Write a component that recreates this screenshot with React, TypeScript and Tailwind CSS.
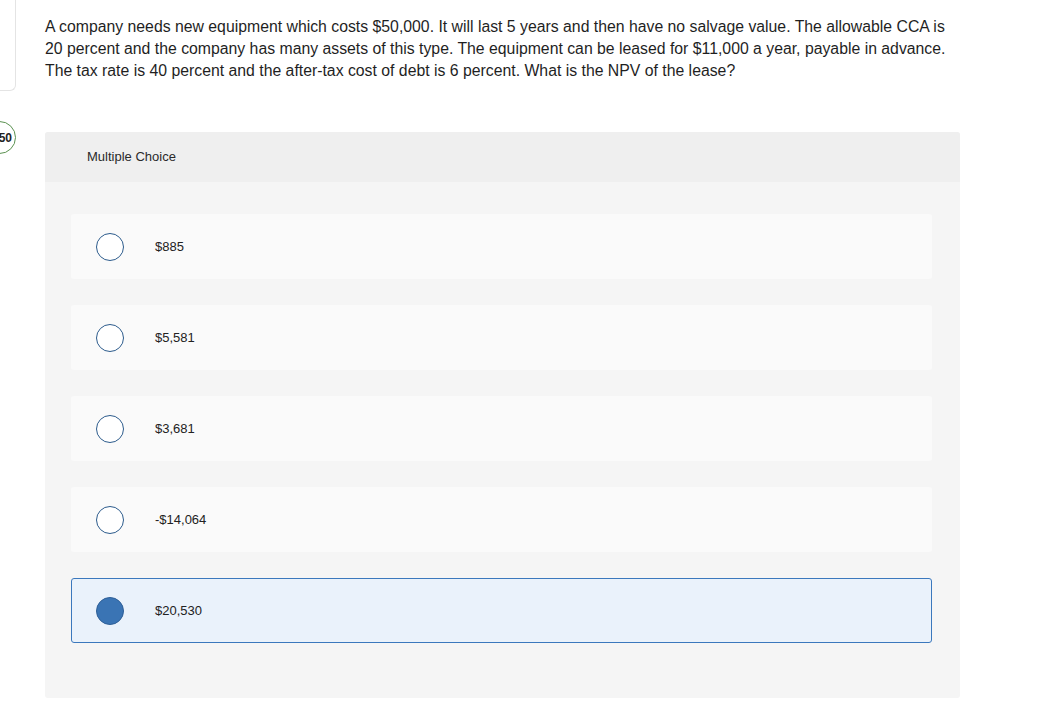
import React from 'react'

const options = [
  { label: '$885', selected: false },
  { label: '$5,581', selected: false },
  { label: '$3,681', selected: false },
  { label: '-$14,064', selected: false },
  { label: '$20,530', selected: true },
]

function Radio({ checked }: { checked: boolean }) {
  return checked ? (
    <span className="block w-[28px] h-[28px] rounded-full bg-[#3a74b4] border border-[#2e5f97] shrink-0" />
  ) : (
    <span className="block w-[28px] h-[28px] rounded-full bg-white border-[1.5px] border-[#2c5b8c] shrink-0" />
  )
}

export default function App() {
  return (
    <div className="w-full h-[715px] bg-white overflow-hidden flex font-['Liberation_Sans',Arial,sans-serif] text-[#222]">
      {/* left rail: previous card edge + question number */}
      <div className="w-[16px] shrink-0 flex flex-col">
        <div className="h-[91px] w-full border-r border-b border-[#e4e4e4] rounded-br-[6px]" />
        <div className="mt-[30px] ml-[-17px] h-[33px] w-[33px] rounded-full border border-[#5a9150] bg-white flex items-center justify-end pr-[3px] text-[12px] font-bold text-[#222]">
          50
        </div>
      </div>

      <div className="ml-[29px] w-[915px] shrink-0 flex flex-col">
        <p className="pt-[16px] text-[15.8px] leading-[22px] text-[#1f1f1f] w-[906px]">
          A company needs new equipment which costs $50,000. It will last 5 years and then have no salvage value. The
          allowable CCA is 20 percent and the company has many assets of this type. The equipment can be leased for
          $11,000 a year, payable in advance. The tax rate is 40 percent and the after-tax cost of debt is 6 percent.
          What is the NPV of the lease?
        </p>

        <div className="mt-[50px] rounded-[3px] bg-[#f5f5f5] flex flex-col">
          <div className="h-[50px] bg-[#efefef] rounded-t-[3px] flex items-center pl-[42px] text-[13px] text-[#2a2a2a]">
            Multiple Choice
          </div>
          <div className="pt-[32px] pb-[55px] pl-[26px] pr-[28px] flex flex-col gap-[26px]">
            {options.map((o) => (
              <div
                key={o.label}
                className={
                  o.selected
                    ? 'h-[65px] rounded-[3px] bg-[#eaf2fb] border border-[#3b78bd] flex items-center pl-[24px]'
                    : 'h-[65px] rounded-[3px] bg-[#fafafa] flex items-center pl-[25px]'
                }
              >
                <Radio checked={o.selected} />
                <span className="ml-[31px] text-[13px] text-[#222]">{o.label}</span>
              </div>
            ))}
          </div>
        </div>
      </div>
    </div>
  )
}
